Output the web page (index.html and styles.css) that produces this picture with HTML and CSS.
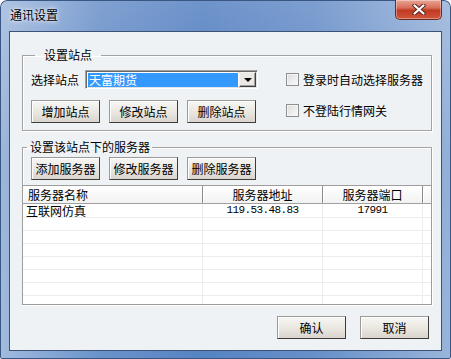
FILE: index.html
```html
<!DOCTYPE html>
<html lang="zh-CN">
<head>
  <meta charset="UTF-8" />
  <title>通讯设置</title>
  <link rel="stylesheet" href="styles.css">
</head>
<body>

<div class="window">
  <div class="titlebar">
    <span class="title">通讯设置</span>
    <button class="close">
      <svg width="14" height="11" viewBox="0 0 14 11">
        <path d="M2.5 1.5 L11.5 9.5 M11.5 1.5 L2.5 9.5" stroke="#5a2620" stroke-width="4.2" stroke-linecap="round"/>
        <path d="M2.5 1.5 L11.5 9.5 M11.5 1.5 L2.5 9.5" stroke="#fff" stroke-width="2.2" stroke-linecap="round"/>
      </svg>
    </button>
  </div>

  <div class="client">
    <fieldset class="group site-group">
      <legend class="legend-wide">设置站点</legend>
      <div class="site-grid">
        <div class="combo-row">
          <span class="field-label">选择站点</span>
          <div class="combo">
            <span class="combo-value">天富期货</span>
            <span class="combo-arrow"><i></i></span>
          </div>
        </div>
        <label class="check"><span class="box"></span>登录时自动选择服务器</label>
        <div class="btn-row">
          <button class="btn">增加站点</button>
          <button class="btn">修改站点</button>
          <button class="btn">删除站点</button>
        </div>
        <label class="check check-low"><span class="box"></span>不登陆行情网关</label>
      </div>
    </fieldset>

    <fieldset class="group server-group">
      <legend class="legend-narrow">设置该站点下的服务器</legend>
      <div class="btn-row server-btns">
        <button class="btn">添加服务器</button>
        <button class="btn">修改服务器</button>
        <button class="btn">删除服务器</button>
      </div>
      <div class="list">
        <div class="list-head">
          <span class="left">服务器名称</span>
          <span>服务器地址</span>
          <span>服务器端口</span>
          <span></span>
        </div>
        <div class="list-row first">
          <span class="left">互联网仿真</span>
          <span class="num">119.53.48.83</span>
          <span class="num">17991</span>
          <span></span>
        </div>
        <div class="list-row"><span></span><span></span><span></span><span></span></div>
        <div class="list-row"><span></span><span></span><span></span><span></span></div>
        <div class="list-row"><span></span><span></span><span></span><span></span></div>
        <div class="list-row"><span></span><span></span><span></span><span></span></div>
        <div class="list-row"><span></span><span></span><span></span><span></span></div>
        <div class="list-row"><span></span><span></span><span></span><span></span></div>
        <div class="list-row"><span></span><span></span><span></span><span></span></div>
      </div>
    </fieldset>

    <div class="dialog-buttons">
      <button class="btn">确认</button>
      <button class="btn">取消</button>
    </div>
  </div>
</div>

</body>
</html>
```

FILE: styles.css
```css
body {
  margin: 0;
  font-family: "Noto Sans CJK SC", sans-serif;
  font-size: 12px;
  color: #000;
  background: #fff;
}
.window {
  width: 451px;
  height: 359px;
  box-sizing: border-box;
  padding: 0 9px;
  border-radius: 7px 7px 2px 2px;
  background:
    linear-gradient(90deg, rgba(255,255,255,0.45) 0%, rgba(255,255,255,0.12) 22%, rgba(255,255,255,0) 45%, rgba(255,255,255,0.1) 70%, rgba(255,255,255,0.4) 100%),
    linear-gradient(180deg, #6f94cb 0%, #4d7bbd 45%, #5684c3 100%);
  box-shadow: inset 0 0 0 1px #3a5683;
}
.titlebar {
  height: 31px;
  display: flex;
  align-items: flex-start;
}
.title {
  margin: 7px 0 0 1px;
  line-height: 16px;
  text-shadow: 0 0 6px rgba(255,255,255,0.9), 0 0 3px rgba(255,255,255,0.9);
}
.close {
  margin-left: auto;
  width: 47px;
  height: 20px;
  padding: 0;
  display: flex;
  align-items: center;
  justify-content: center;
  border: 1px solid #6a2d25;
  border-top: none;
  border-radius: 0 0 5px 5px;
  background: linear-gradient(180deg, #e9a695 0%, #d8705b 40%, #c13a22 55%, #d0563c 100%);
  box-shadow: inset 0 0 0 1px rgba(255,255,255,0.35);
}
.client {
  height: 320px;
  box-sizing: border-box;
  border: 1px solid #3d5274;
  background: #eef2f5;
}
.group {
  margin: 0 10px 0 12px;
  padding: 0;
  min-width: 0;
  width: 410px;
  box-sizing: border-box;
  border: 1px solid #a3a3a3;
  box-shadow: inset 1px 1px #fff, 1px 1px #fff;
}
.group legend {
  line-height: 14px;
  height: 14px;
}
.legend-wide {
  margin-left: 4px;
  padding: 0 9px;
}
.legend-narrow {
  margin-left: 4px;
  padding: 0 2px 0 3px;
}
.site-group {
  margin-top: 16px;
  padding: 8px 0 7px 8px;
}
.site-grid {
  display: grid;
  grid-template-columns: 255px auto;
  grid-template-rows: 19px 23px;
  row-gap: 11px;
  align-items: center;
}
.combo-row {
  display: flex;
  align-items: center;
  gap: 6px;
}
.field-label {
  width: 48px;
  white-space: nowrap;
}
.combo {
  width: 173px;
  height: 19px;
  box-sizing: border-box;
  display: flex;
  border: 1px solid;
  border-color: #a0a0a0 #fff #fff #a0a0a0;
  box-shadow: inset 1px 1px #696969, inset -1px -1px #e3e3e3;
  background: #fff;
  padding: 2px 2px 1px 2px;
}
.combo-value {
  flex: 1;
  background: #3399ff;
  color: #fff;
  line-height: 14px;
  padding-left: 1px;
  margin-right: 1px;
}
.combo-arrow {
  width: 17px;
  box-sizing: border-box;
  margin: -1px -1px 0 0;
  display: flex;
  align-items: center;
  justify-content: center;
  border: 1px solid;
  border-color: #f3f3f3 #404040 #404040 #f3f3f3;
  box-shadow: inset -1px -1px #a0a0a0;
  background: #ece9e4;
}
.combo-arrow i {
  width: 0;
  height: 0;
  border-left: 4px solid transparent;
  border-right: 4px solid transparent;
  border-top: 4px solid #000;
}
.check {
  display: flex;
  align-items: center;
  gap: 4px;
  white-space: nowrap;
}
.check-low {
  align-self: start;
  margin-top: 2px;
}
.box {
  width: 13px;
  height: 13px;
  box-sizing: border-box;
  border: 1px solid #8e8f8f;
  background: linear-gradient(135deg, #dcdcdc, #fbfbfb);
  box-shadow: inset 0 0 0 1px #f4f4f4;
}
.btn-row {
  display: flex;
  gap: 9px;
}
.btn {
  width: 69px;
  height: 23px;
  padding: 0;
  font-family: inherit;
  font-size: 12px;
  color: #000;
  border: 1px solid;
  border-color: #9a9a9a #3c3c3c #3c3c3c #9a9a9a;
  box-shadow: inset 1px 1px #fff;
  background: linear-gradient(180deg, #f7f6f3 0%, #ebe8e2 50%, #d9d5cd 100%);
}
.server-group {
  margin-top: 9px;
  padding: 3px 0 0 0;
  border-bottom: none;
}
.server-btns {
  margin-left: 8px;
}
.list {
  margin: 5px -1px 0 -1px;
  height: 120px;
  box-sizing: border-box;
  border: 1px solid #9d9d9d;
  background: #fff;
  overflow: hidden;
}
.list-head,
.list-row {
  display: grid;
  grid-template-columns: 180px 120px 100px 8px;
}
.list-head {
  height: 18px;
  border-bottom: 1px solid #a0a0a0;
  box-sizing: border-box;
  background: linear-gradient(180deg, #ffffff, #f2f2f2);
}
.list-head span {
  line-height: 17px;
  text-align: center;
  border-right: 1px solid #8c8c8c;
  box-shadow: inset 1px 0 #fff;
  white-space: nowrap;
}
.list-head span:last-child {
  border-right: none;
}
.list-head .left,
.list-row .left {
  text-align: left;
  padding-left: 5px;
}
.list-row {
  height: 13px;
  box-sizing: border-box;
  border-bottom: 1px solid #ececec;
}
.list-row.first {
  height: 14px;
}
.list-row span {
  line-height: 12px;
  text-align: center;
  border-right: 1px solid #ececec;
  white-space: nowrap;
}
.list-row span:last-child {
  border-right: none;
}
.list-row .left {
  padding-left: 3px;
  line-height: 13px;
}
.list-row .num {
  font-family: "Liberation Mono", monospace;
  font-size: 11px;
  letter-spacing: -0.6px;
  line-height: 13px;
}
.dialog-buttons {
  display: flex;
  justify-content: flex-end;
  gap: 14px;
  margin-top: 11px;
  padding-right: 12px;
}
```
